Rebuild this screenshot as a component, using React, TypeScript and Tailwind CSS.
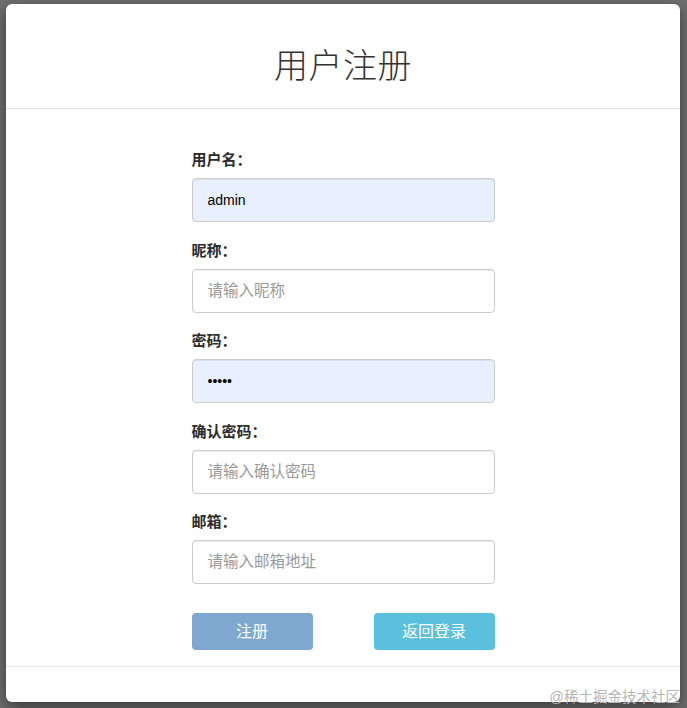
import React from "react";

const font = { fontFamily: '"Liberation Sans", "Noto Sans CJK SC", sans-serif' };

type Field = {
  label: string;
  type?: string;
  value?: string;
  placeholder?: string;
  autofill?: boolean;
};

const fields: Field[] = [
  { label: "用户名：", value: "admin", autofill: true },
  { label: "昵称：", placeholder: "请输入昵称" },
  { label: "密码：", type: "password", value: "12345", autofill: true },
  { label: "确认密码：", placeholder: "请输入确认密码" },
  { label: "邮箱：", placeholder: "请输入邮箱地址" },
];

export default function App() {
  return (
    <div
      className="relative h-[708px] w-[687px] overflow-hidden bg-[#6f6f6f] pt-[4px] pl-[6px]"
      style={font}
    >
      <div className="flex h-[698px] w-[674px] flex-col rounded-[6px] bg-white shadow-[0_5px_15px_rgba(0,0,0,0.5)]">
        {/* header */}
        <div className="flex h-[105px] shrink-0 justify-center border-b border-[#e5e5e5] pt-[45px]">
          <h1 className="text-[34px] font-light leading-none tracking-[0.5px] text-[#333]">
            用户注册
          </h1>
        </div>

        {/* body */}
        <div className="flex flex-1 flex-col items-center border-b border-[#e5e5e5] pt-[41px]">
          <div className="w-[303px]">
            {fields.map((f) => (
              <div key={f.label} className="mb-[18.5px]">
                <label className="mb-2 block h-[20px] text-[15px] font-bold leading-[20px] text-[#2b2b2b]">
                  {f.label}
                </label>
                <input
                  type={f.type ?? "text"}
                  defaultValue={f.value}
                  placeholder={f.placeholder}
                  readOnly
                  className={
                    "block h-[44px] w-full rounded-[4px] border border-[#ccc] px-[15px] text-[14px] text-black shadow-[inset_0_1px_1px_rgba(0,0,0,0.075)] outline-none placeholder:text-[15.5px] placeholder:text-[#999] " +
                    (f.autofill ? "bg-[#e8f0fe]" : "bg-white")
                  }
                />
              </div>
            ))}
            <div className="mt-[29px] flex justify-between">
              <button className="h-[37px] w-[121px] rounded-[4px] bg-[#7ea8d0] text-[16px] text-white">
                注册
              </button>
              <button className="h-[37px] w-[121px] rounded-[4px] bg-[#5bc0de] text-[16px] text-white">
                返回登录
              </button>
            </div>
          </div>
        </div>

        {/* footer */}
        <div className="h-[35px] shrink-0" />
      </div>

      <div className="absolute right-[7px] bottom-[4px] text-[14.5px] leading-none text-[#b5b5b5]">
        @稀土掘金技术社区
      </div>
    </div>
  );
}
